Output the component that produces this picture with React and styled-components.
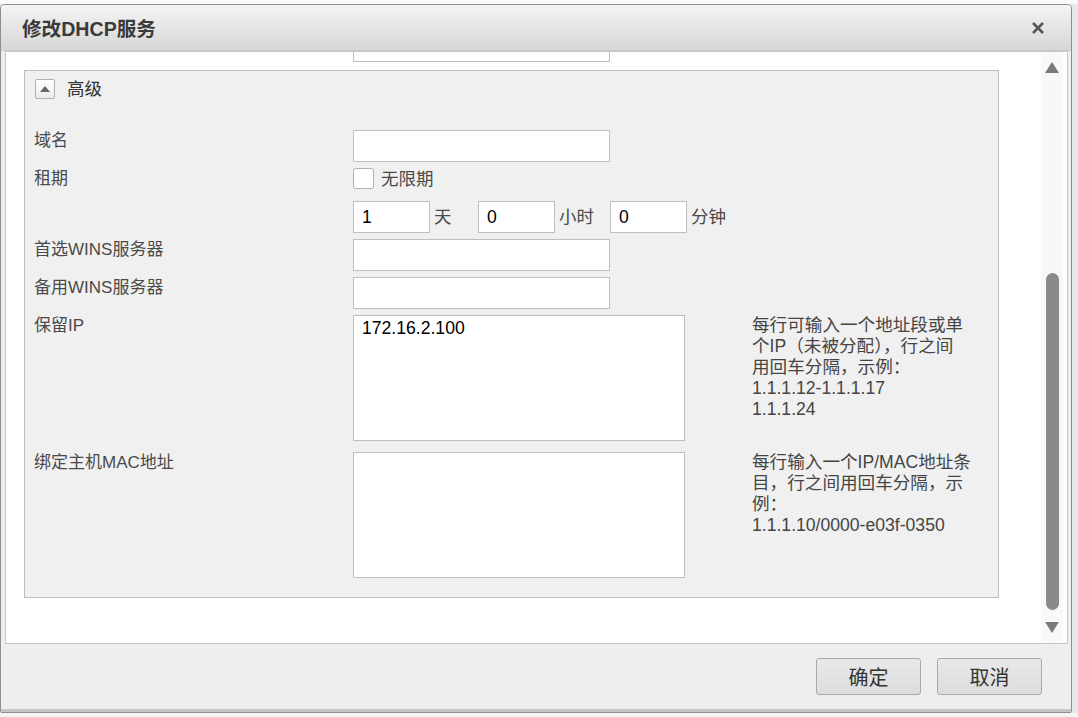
import React from "react";
import styled, { createGlobalStyle } from "styled-components";

const GlobalStyle = createGlobalStyle`
  html, body {
    margin: 0;
    padding: 0;
  }
  body {
    background: #e8e8e8;
    font-family: "Liberation Sans", "Noto Sans CJK SC", sans-serif;
    overflow: hidden;
  }
`;

const Page = styled.div`
  width: 1078px;
  height: 717px;
  box-sizing: border-box;
  padding-top: 4px;
  background: linear-gradient(#fafafa 0 4px, #e8e8e8 4px 713px, #f4f4f4 713px);
`;

const Dialog = styled.div`
  width: 1072px;
  height: 709px;
  box-sizing: border-box;
  border: 1px solid #8e8e8e;
  border-radius: 4px 4px 2px 2px;
  background: #eeeeee;
  display: flex;
  flex-direction: column;
  overflow: hidden;
`;

const TitleBar = styled.div`
  height: 45px;
  flex: none;
  display: flex;
  align-items: center;
  justify-content: space-between;
  padding: 0 27px 0 21px;
  border-bottom: 1px solid #c9c9c9;
  background: linear-gradient(#f4f4f4, #d7d7d7);
`;

const Title = styled.h1`
  margin: 0;
  font-size: 19.6px;
  font-weight: bold;
  color: #3a3a3a;
`;

const CloseButton = styled.button`
  width: 12px;
  height: 12px;
  padding: 0;
  border: 0;
  background: none;
  display: flex;
  cursor: pointer;
`;

const Frame = styled.div`
  height: 593px;
  flex: none;
  box-sizing: border-box;
  margin: 0 3px 0 4px;
  border: 1px solid #c6c6c6;
  background: #fff;
  display: flex;
`;

const Viewport = styled.div`
  flex: 1;
  overflow: hidden;
  padding: 0 18px;
`;

const Scroller = styled.div`
  margin-top: -22px;
`;

const ScrollBar = styled.div`
  width: 22px;
  flex: none;
  margin-right: 4px;
  background: #f8f8f8;
  display: flex;
  flex-direction: column;
  align-items: center;
  padding: 10px 0;
  box-sizing: border-box;
`;

const Arrow = styled.div`
  width: 0;
  height: 0;
  border-left: 7.5px solid transparent;
  border-right: 7.5px solid transparent;
  ${(p) =>
    p.$down
      ? "border-top: 11px solid #7a7a7a;"
      : "border-bottom: 11px solid #7a7a7a;"}
`;

const Track = styled.div`
  flex: 1;
  width: 13px;
`;

const Thumb = styled.div`
  width: 13px;
  border-radius: 7px;
  background: #8a8a8a;
`;

const Row = styled.div`
  display: flex;
  align-items: flex-start;
  margin-bottom: ${(p) => p.$mb || 0}px;
  padding-left: ${(p) => p.$pl || 0}px;
`;

const Label = styled.div`
  width: 319px;
  flex: none;
  font-size: 17px;
  line-height: 20px;
  padding-top: 1px;
  color: #4a4a4a;
`;

const Field = styled.div`
  display: flex;
  align-items: ${(p) => (p.$center ? "center" : "flex-start")};
`;

const TextInput = styled.input`
  width: ${(p) => p.$w || 257}px;
  height: 32px;
  box-sizing: border-box;
  border: 1px solid #bfbfbf;
  background: #fff;
  padding: 0 8px;
  margin: 0;
  font-family: inherit;
  font-size: 17.6px;
  color: #000;
  outline: none;
`;

const TextArea = styled.textarea`
  width: 332px;
  height: 126px;
  box-sizing: border-box;
  border: 1px solid #bfbfbf;
  background: #fff;
  padding: 2px 8px;
  margin: 0;
  font-family: inherit;
  font-size: 17.6px;
  line-height: 20px;
  color: #000;
  resize: none;
  outline: none;
`;

const Unit = styled.span`
  width: ${(p) => (p.$w ? `${p.$w}px` : "auto")};
  box-sizing: border-box;
  padding-left: 4px;
  font-size: 17.5px;
  line-height: 32px;
  color: #4a4a4a;
`;

const Check = styled.span`
  width: 21px;
  height: 21px;
  box-sizing: border-box;
  border: 1px solid #b2b2b2;
  border-radius: 3px;
  background: #fff;
`;

const CheckText = styled.span`
  margin-left: 7px;
  font-size: 17.5px;
  line-height: 20px;
  color: #4a4a4a;
`;

const Hint = styled.div`
  margin-left: 67px;
  font-size: 17.6px;
  line-height: 21px;
  color: #454545;
  white-space: nowrap;

  span {
    display: block;
  }
`;

const Group = styled.fieldset`
  margin: 8px 0 0;
  width: 975px;
  box-sizing: border-box;
  border: 1px solid #bdbdbd;
  background: #f0f0f0;
  padding: 8px 9px 19px 9px;
  min-width: 0;
`;

const GroupHead = styled.div`
  display: flex;
  align-items: center;
  gap: 12px;
  margin-left: 1px;
  margin-bottom: 31px;
`;

const Toggle = styled.button`
  width: 20px;
  height: 20px;
  box-sizing: border-box;
  padding: 0;
  border: 1px solid #b0b0b0;
  border-radius: 2px;
  background: linear-gradient(#ffffff, #ececec);
  display: flex;
  align-items: center;
  justify-content: center;

  &::after {
    content: "";
    width: 0;
    height: 0;
    border-left: 5px solid transparent;
    border-right: 5px solid transparent;
    border-bottom: 6px solid #666;
  }
`;

const GroupTitle = styled.span`
  font-size: 17.5px;
  line-height: 20px;
  color: #333;
`;

const Footer = styled.div`
  height: 65px;
  flex: none;
  display: flex;
  justify-content: flex-end;
  align-items: center;
  gap: 16px;
  padding-right: 29px;
  background: #eeeeee;
  border-bottom: 3px solid #c6c6c6;
`;

const Button = styled.button`
  width: 105px;
  height: 37px;
  border: 1px solid #a9a9a9;
  border-radius: 3px;
  background: linear-gradient(#e9e9e9, #dcdcdc);
  font-family: inherit;
  font-size: 20px;
  color: #333;
  padding: 0;
  cursor: pointer;
`;

const CloseIcon = () => (
  <svg width="12" height="12" viewBox="0 0 12 12">
    <path d="M1 1 L11 11 M11 1 L1 11" stroke="#555" strokeWidth="2.6" strokeLinecap="butt" />
  </svg>
);

export default function App() {
  const thumb = { top: 200, height: 337 };

  return (
    <Page>
      <GlobalStyle />
      <Dialog>
        <TitleBar>
          <Title>修改DHCP服务</Title>
          <CloseButton aria-label="关闭">
            <CloseIcon />
          </CloseButton>
        </TitleBar>

        <Frame>
          <Viewport>
            <Scroller>
              <Row $pl={10}>
                <Label />
                <TextInput defaultValue="" readOnly />
              </Row>

              <Group>
                <GroupHead>
                  <Toggle aria-label="收起" />
                  <GroupTitle>高级</GroupTitle>
                </GroupHead>

                <Row $mb={6}>
                  <Label>域名</Label>
                  <TextInput defaultValue="" />
                </Row>
                <Row $mb={12}>
                  <Label>租期</Label>
                  <Field $center>
                    <Check />
                    <CheckText>无限期</CheckText>
                  </Field>
                </Row>
                <Row $mb={6}>
                  <Label />
                  <Field>
                    <TextInput $w={77} defaultValue="1" />
                    <Unit $w={48}>天</Unit>
                    <TextInput $w={77} defaultValue="0" />
                    <Unit $w={55}>小时</Unit>
                    <TextInput $w={77} defaultValue="0" />
                    <Unit>分钟</Unit>
                  </Field>
                </Row>
                <Row $mb={6}>
                  <Label>首选WINS服务器</Label>
                  <TextInput defaultValue="" />
                </Row>
                <Row $mb={6}>
                  <Label>备用WINS服务器</Label>
                  <TextInput defaultValue="" />
                </Row>
                <Row $mb={11}>
                  <Label>保留IP</Label>
                  <Field>
                    <TextArea defaultValue="172.16.2.100" />
                    <Hint>
                      <span>每行可输入一个地址段或单</span>
                      <span>个IP（未被分配），行之间</span>
                      <span>用回车分隔，示例：</span>
                      <span>1.1.1.12-1.1.1.17</span>
                      <span>1.1.1.24</span>
                    </Hint>
                  </Field>
                </Row>
                <Row>
                  <Label>绑定主机MAC地址</Label>
                  <Field>
                    <TextArea defaultValue="" />
                    <Hint>
                      <span>每行输入一个IP/MAC地址条</span>
                      <span>目，行之间用回车分隔，示</span>
                      <span>例：</span>
                      <span>1.1.1.10/0000-e03f-0350</span>
                    </Hint>
                  </Field>
                </Row>
              </Group>
            </Scroller>
          </Viewport>

          <ScrollBar>
            <Arrow />
            <Track>
              <Thumb style={{ marginTop: thumb.top, height: thumb.height }} />
            </Track>
            <Arrow $down />
          </ScrollBar>
        </Frame>

        <Footer>
          <Button>确定</Button>
          <Button>取消</Button>
        </Footer>
      </Dialog>
    </Page>
  );
}
